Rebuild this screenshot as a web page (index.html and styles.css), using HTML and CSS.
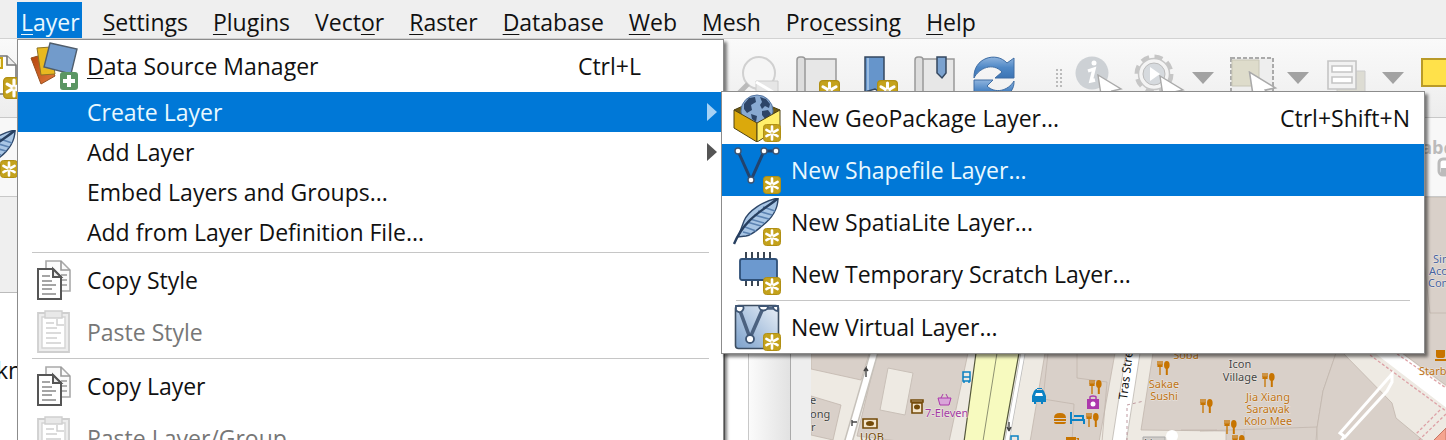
FILE: index.html
```html
<!DOCTYPE html>
<html lang="en">
<head>
<meta charset="utf-8">
<meta name="viewport" content="width=device-width, initial-scale=1">
<title>Layer menu</title>
<link rel="stylesheet" href="styles.css">
</head>
<body>
<svg class="defs" aria-hidden="true">
  <defs>
    <linearGradient id="gBlue" x1="0" y1="0" x2="0" y2="1"><stop offset="0" stop-color="#8fb4de"/><stop offset=".5" stop-color="#4f88c6"/><stop offset="1" stop-color="#3c74b4"/></linearGradient>
    <linearGradient id="gVirtual" x1="0" y1="1" x2="1" y2="0"><stop offset="0" stop-color="#7ba0cb"/><stop offset="1" stop-color="#eaf0f7"/></linearGradient>
    <linearGradient id="gOrange" x1="0" y1="0" x2="1" y2="1"><stop offset="0" stop-color="#b5440c"/><stop offset="1" stop-color="#e07a3c"/></linearGradient>
    <symbol id="badge" viewBox="0 0 18 18">
      <rect x=".5" y=".5" width="17" height="17" rx="3" fill="#c4a21c" stroke="#b08f14"/>
      <path d="M9 2.500v13M3.400 5.800l11.200 6.400M14.600 5.800L3.400 12.200" stroke="#fff" stroke-width="2.600" stroke-linecap="round"/>
      <circle cx="9" cy="9" r="1.300" fill="#e0cc80"/>
    </symbol>
    <symbol id="sources" viewBox="0 0 48 48">
      <path d="M1 16l14-4 10 22-14 8z" fill="url(#gOrange)" stroke="#97501f"/>
      <path d="M7 6l14-1 4 27-14 1z" fill="#e8b920" stroke="#8e7425"/>
      <path d="M20 1l27 6-6 25-27-7z" fill="#729bcb" stroke="#4f5d6c" stroke-width="1.400"/>
      <rect x="30" y="30" width="18" height="18" rx="3" fill="#5b9663"/>
      <path d="M39 33v12M33 39h12" stroke="#fff" stroke-width="4"/>
    </symbol>
    <symbol id="copy" viewBox="0 0 48 48">
      <path d="M16 5h15l9 9v21H16z" fill="#fafafa" stroke="#a9a9a9" stroke-width="1.600"/>
      <path d="M31 5v9h9M31 19h6M31 24h6M31 29h6" fill="none" stroke="#999" stroke-width="1.600"/>
      <path d="M8 13h15l8 8v22H8z" fill="#fff" stroke="#555" stroke-width="2"/>
      <path d="M23 13v8h8z" fill="#eee" stroke="#555" stroke-width="2"/>
      <path d="M12 20h8M12 25h10M12 29h14M12 33h10M12 38h14" stroke="#888" stroke-width="1.600"/>
    </symbol>
    <symbol id="paste" viewBox="0 0 48 48">
      <path d="M8 5h31v39H8z" fill="#ededed" stroke="#cfcfcf" stroke-width="1.800"/>
      <path d="M12 9h23v31H12z" fill="#fff" stroke="#d4d4d4" stroke-width="1.400"/>
      <path d="M15 3h17v7H15z" fill="#e8e8e8" stroke="#cfcfcf" stroke-width="1.400"/>
      <path d="M27 11v6h7M16 15h8M16 20h11M16 25h15M16 30h11M16 35h15" fill="none" stroke="#d0d0d0" stroke-width="1.500"/>
    </symbol>
    <symbol id="geopackage" viewBox="0 0 48 48">
      <path d="M1 16l22-10 24 10-23 13z" fill="#6e5a12" stroke="#4b4014"/>
      <circle cx="24" cy="17" r="16" fill="#89aad2" stroke="#5273a0"/>
      <path d="M11 10l5-6 6-1 1 5-5 3 1 5-5 3-3-4zM27 3l6 2 4 5-1 4-4-2-3 3-2-4 2-3zM18 20l6 2-1 6-4-3zM29 17l6-1 3 4-5 6-4-5z" fill="#2d4568"/>
      <path d="M1 16l23 13v19L1 34z" fill="#dba90c" stroke="#4f4213"/>
      <path d="M47 16L24 29v19l23-14z" fill="#ffef6b" stroke="#4f4213"/>
      <use href="#badge" x="30" y="30" width="18" height="18"/>
    </symbol>
    <symbol id="shape" viewBox="0 0 48 48">
      <path d="M5 5l13 29L31 5h12" fill="none" stroke="#21436e" stroke-width="3"/>
      <g fill="#fff" stroke="#3c5574" stroke-width="1.400"><circle cx="5" cy="5" r="3"/><circle cx="18" cy="34" r="3"/><circle cx="31" cy="5" r="3"/><circle cx="43" cy="5" r="3"/></g>
      <use href="#badge" x="30" y="30" width="18" height="18"/>
    </symbol>
    <symbol id="feather" viewBox="0 0 48 48">
      <path d="M45 0C30 3 15 13 11 23L5 39l8-1c6-1 10-5 16-10 9-7 16-15 16-28z" fill="#a9c6e5" stroke="#2e4769" stroke-width="1.400"/>
      <path d="M14 24l14 4M17 21l14 4M21 17l15 4M25 13l14 4M30 9l12 4M12 29l11 4M10 34l8 2" stroke="#5c83b2" stroke-width="1.600"/>
      <path d="M45 0C33 11 12 19 1 46" fill="none" stroke="#273f60" stroke-width="2.400"/>
      <use href="#badge" x="30" y="30" width="18" height="18"/>
    </symbol>
    <symbol id="chip" viewBox="0 0 48 48">
      <path d="M13 2v8M19 2v8M25 2v8M31 2v8M37 2v8M13 29v7M19 29v7M25 29v7" stroke="#3b4653" stroke-width="2"/>
      <rect x="7" y="9" width="37" height="21" rx="2" fill="#6c99cf" stroke="#2f5078" stroke-width="1.800"/>
      <use href="#badge" x="30" y="27" width="18" height="18"/>
    </symbol>
    <symbol id="virtual" viewBox="0 0 48 48">
      <rect x="2.500" y="2.500" width="43" height="43" rx="3" fill="url(#gVirtual)" stroke="#3d4e62" stroke-width="1.600"/>
      <path d="M6 5l11 30L30 5h14" fill="none" stroke="#4c6280" stroke-width="3.600"/>
      <g fill="#fff" stroke="#3f5674" stroke-width="1.800"><path d="M3 3h7a4 4 0 0 1-7 4zM26 3h9a4 4 0 0 1-9 0zM40 3h5v5a5 5 0 0 1-5-5z"/><circle cx="17" cy="36" r="4"/></g>
      <use href="#badge" x="30" y="30" width="18" height="18"/>
    </symbol>
    <symbol id="fork" viewBox="0 0 13 15">
      <path d="M1 0v4M3 0v4M5 0v4M3 4v10" stroke="#c77400" stroke-width="1.300"/><path d="M.4 3.500h5.200V6H.4z" fill="#c77400"/>
      <ellipse cx="9.800" cy="4" rx="2.800" ry="4" fill="#c77400"/><path d="M9.800 6v8" stroke="#c77400" stroke-width="2"/>
    </symbol>
    <symbol id="cursor" viewBox="0 0 26 32"><path d="M1 1l23 14-9 2 7 10-5 3-7-10-5 7z" fill="#fff" stroke="#aaa" stroke-width="1.400"/></symbol>
  </defs>
</svg>

<div class="app">
  <nav class="menubar" aria-label="Main menu">
    <button class="menubar-item is-open"><u>L</u>ayer</button>
    <button class="menubar-item"><u>S</u>ettings</button>
    <button class="menubar-item"><u>P</u>lugins</button>
    <button class="menubar-item">Vect<u>o</u>r</button>
    <button class="menubar-item"><u>R</u>aster</button>
    <button class="menubar-item"><u>D</u>atabase</button>
    <button class="menubar-item"><u>W</u>eb</button>
    <button class="menubar-item"><u>M</u>esh</button>
    <button class="menubar-item">Pro<u>c</u>essing</button>
    <button class="menubar-item"><u>H</u>elp</button>
  </nav>

  <div class="toolbar">
    <div class="tool-start">
      <button class="tool" aria-label="New print layout"><svg viewBox="0 0 48 48"><path d="M8 5h29l9 9v29H8z" fill="#fff" stroke="#777" stroke-width="1.600"/><path d="M37 5v9h9" fill="#eee" stroke="#777" stroke-width="1.600"/><path d="M24 7h8v10h-8z" fill="#fff3b0" stroke="#c9a413" stroke-width="2"/><use href="#badge" x="33" y="26" width="22" height="22"/></svg></button>
    </div>
    <button class="tool" aria-label="Zoom last"><svg viewBox="0 0 48 48"><circle cx="24" cy="19" r="16" fill="#f5f5f5" stroke="#d0d0d0" stroke-width="2"/><path d="M13 30L2 41" stroke="#bbb" stroke-width="5"/><path d="M21 27h22v18H21z" fill="#e6e6e6" stroke="#ccc"/><path d="M21 28l17 10" stroke="#fff" stroke-width="3"/></svg></button>
    <button class="tool" aria-label="New map view"><svg viewBox="0 0 48 48"><path d="M6 5h36v37H6z" fill="#e7e7e7" stroke="#999" stroke-width="1.500"/><rect x="3" y="3" width="8" height="41" rx="3" fill="#ddd" stroke="#999" stroke-width="1.500"/><use href="#badge" x="25" y="26" width="21" height="21"/></svg></button>
    <button class="tool" aria-label="New bookmark"><svg viewBox="0 0 48 48"><path d="M12 3h19v38l-9-6-10 3z" fill="#6695cb" stroke="#34475f" stroke-width="1.500"/><path d="M15 4v32" stroke="#9bbde2" stroke-width="2"/><use href="#badge" x="24" y="26" width="21" height="21"/></svg></button>
    <button class="tool" aria-label="Show bookmarks"><svg viewBox="0 0 48 48"><path d="M6 5h36v37H6z" fill="#e7e7e7" stroke="#999" stroke-width="1.500"/><rect x="3" y="3" width="8" height="41" rx="3" fill="#ddd" stroke="#999" stroke-width="1.500"/><path d="M25 3h9v16l-4 5-5-5z" fill="#7ba2cf" stroke="#34475f" stroke-width="1.500"/></svg></button>
    <button class="tool" aria-label="Refresh"><svg viewBox="0 0 48 48"><path d="M3 24C2 4 25-3 36 9l7-5v20H24l7-6c-9-10-23-4-28 6z" fill="url(#gBlue)" stroke="#3f6da3"/><path d="M3 26h19l-6 6c8 8 21 5 27-5 1 16-21 25-34 13l-6 5z" fill="url(#gBlue)" stroke="#3f6da3"/></svg></button>
    <span class="grip"></span>
    <button class="tool" aria-label="Identify features"><svg viewBox="0 0 48 48"><circle cx="18" cy="19" r="16.500" fill="#cdd1d5"/><path d="M14 17l6-2-3 12 4-1" fill="none" stroke="#fff" stroke-width="3.400"/><circle cx="20" cy="9" r="2.500" fill="#fff"/><use href="#cursor" x="23" y="20" width="26" height="32"/></svg></button>
    <button class="tool" aria-label="Run feature action"><svg viewBox="0 0 48 48"><circle cx="21" cy="20" r="17" fill="none" stroke="#c6c6c6" stroke-width="5" stroke-dasharray="8 5.350"/><circle cx="21" cy="20" r="15.500" fill="#f4f4f4" stroke="#c6c6c6" stroke-width="1.500"/><circle cx="21" cy="20" r="11" fill="#d6dade" stroke="#bbb"/><path d="M17 13l10 7-10 7z" fill="#fff"/><use href="#cursor" x="26" y="21" width="26" height="32"/></svg></button>
    <span class="caret-down"></span>
    <button class="tool" aria-label="Select features"><svg viewBox="0 0 48 48"><path d="M3 4h42v41H3z" fill="#eee" stroke="#aaa" stroke-width="2" stroke-dasharray="4 2"/><path d="M4 6h27v26H4z" fill="#dedccb" stroke="#c8c6b6"/><use href="#cursor" x="20" y="17" width="30" height="36"/></svg></button>
    <span class="caret-down"></span>
    <button class="tool" aria-label="Select by form"><svg viewBox="0 0 48 48"><path d="M14 17h28v27H14z" fill="#dddcd3" stroke="#ccc"/><path d="M5 7h28v28H5z" fill="#f2f2f2" stroke="#c5c5c5" stroke-width="1.600"/><path d="M9 12h20v6H9zM9 23h20v6H9z" fill="#fff" stroke="#c5c5c5" stroke-width="1.600"/></svg></button>
    <span class="caret-down"></span>
    <button class="tool" aria-label="Deselect"><svg viewBox="0 0 48 48"><path d="M4 5h36v27H4z" fill="#ffe14a" stroke="#b99a28" stroke-width="2"/></svg></button>
  </div>

  <div class="toolbar toolbar-second">
    <div class="tool-start">
      <button class="tool" aria-label="New SpatiaLite layer"><svg viewBox="0 0 48 48"><use href="#feather" width="48" height="48"/></svg></button>
    </div>
    <button class="label-tool" aria-label="Layer labeling">abc<svg viewBox="0 0 24 20"><rect x="6" y="2" width="20" height="16" rx="4" fill="#fff" stroke="#bbb" stroke-width="3"/><path d="M8 11h18v6H8z" fill="#bbb"/></svg></button>
  </div>

  <main class="workspace">
    <aside class="panel"><div class="panel-head"></div><div class="panel-body">kn</div></aside>
    <div class="dock"></div>
    <div class="dock-edge"></div>
    <svg class="map" viewBox="811 196 635 244" preserveAspectRatio="xMinYMin slice" role="img" aria-label="Street map">
      <path d="M811 196h635v244H811z" fill="#eeeae3"/>
      <g fill="#d9d0c9" stroke="#c1b6ad" stroke-width=".8">
        <path d="M811 196h98l-40 157-8 26-50-11z"/>
        <path d="M811 395l30 9-8 35-22-5z"/>
        <path d="M877 352h91l-19 89h-43l-49-6z"/>
        <path d="M1045 352h70l-16 89h-69z"/>
        <path d="M1153 352h183l-13 38-6 37-1 13h-90v-10l-85-1z"/>
        <path d="M1336 352h7l49 50 4 15 29 24H1317v-14l6-37z"/>
        <path d="M1418 196h29v189l-45-33z"/>
        <path d="M1048 352l-5 46 31 5-2 38M1077 352v25l30 4-5 60M1181 429h36M1200 430l117-4M1244 430v10M1424 260l6 52h16" fill="none"/>
      </g>
      <path d="M888 367l25 5-8 42-25-5z" fill="#eeeae3" stroke="#c9c0b8"/>
      <path d="M874 352l-26 90" stroke="#c6c1ba" stroke-width="9"/><path d="M874 352l-26 90" stroke="#fff" stroke-width="6"/>
      <path d="M976 352h43l-16 89h-39z" fill="#f7fabf" stroke="#55583c" stroke-width="1.200"/>
      <path d="M997 352l-14 88" stroke="#8e9171"/>
      <path d="M1023 352l-16 88" stroke="#bbb" stroke-width="5"/><path d="M1023 352l-16 88" stroke="#fff" stroke-width="3.500"/>
      <path d="M1133 352l-14 90" stroke="#c9c4be" stroke-width="15"/><path d="M1133 352l-14 90" stroke="#fff" stroke-width="13"/>
      <path d="M1127 440v-36l17-4" fill="none" stroke="#bf9aa0" stroke-dasharray="3 3"/>
      <path d="M1380 346l72 55" stroke="#fff" stroke-width="16"/>
      <path d="M1370 354l76 56M1393 350l53 37M1446 413l-28 27M1440 409l-24 24" fill="none" stroke="#dda0a5" stroke-width="1.300" stroke-dasharray="3 2"/>
      <path d="M1392 373l-52 59 5 4 42-46 5-9zM1345 434l-5 8" fill="none" stroke="#fff" stroke-width="3"/>
      <path d="M1433 440l13-13v13z" fill="#f5a48f" stroke="#c67564"/>
      <circle cx="1172" cy="435" r="6" fill="#fff"/><path d="M1143 436h22v5h-22z" fill="#d0cdc9" stroke="#aaa"/>
      <path d="M866 376v-9l-2 3m2-3l2 3M852 425v-6m0 2h5M1009 421v9l-2-4m2 4l2-4" fill="none" stroke="#444" stroke-width="1.400"/>
      <g>
        <use href="#fork" x="1157" y="360" width="13" height="15"/><use href="#fork" x="1089" y="379" width="13" height="15"/><use href="#fork" x="1086" y="412" width="13" height="15"/><use href="#fork" x="1200" y="398" width="13" height="15"/><use href="#fork" x="1262" y="372" width="13" height="15"/><use href="#fork" x="1224" y="419" width="13" height="15"/><use href="#fork" x="1232" y="434" width="13" height="15"/>
      </g>
      <path d="M1034 390l2-2h6l2 2 2 5v6h-3v2h-2v-2h-5v2h-2v-2h-2v-6zM1037 389h5v-2h-5z" fill="#0c82c4"/><path d="M1035 395h8l-1-3h-6z" fill="#fff"/>
      <path d="M1054 417q0-5 6-5t6 5zM1054 418h12v2h-12zM1054 421h12q0 2-2 2h-8q-2 0-2-2z" fill="#c77400"/>
      <path d="M1071 411v12M1071 419h13v4M1074 415h9v3" fill="none" stroke="#0c82c4" stroke-width="2"/>
      <path d="M1087 398h12v10h-12z" fill="#ac39ac"/><path d="M1090 398v-2q0-1 3-1t3 1v2" fill="none" stroke="#ac39ac" stroke-width="1.500"/><circle cx="1093" cy="403" r="2.500" fill="#fff"/>
      <path d="M1066 436h10v5h-10zM1076 437h3v3" fill="#c77400"/>
      <path d="M1436 349h9v6q0 2-2 2h-5q-2 0-2-2zM1435 358h11v2h-11z" fill="#c77400"/>
      <g fill="none" stroke="#0c82c4" stroke-width="1.500"><path d="M963 371h7v9h-7zM963 376h7M964 380v2M969 380v2M1011 435h7v7h-7z"/></g>
      <path d="M938 397h13l-2 7h-9zM941 397l2-4M948 397l-2-4" fill="#d9a5d9" stroke="#ac39ac"/>
      <path d="M911 401h12v-2h-12zM912 402v10h10v-10zM863 418h14v9h-14z" fill="#f3e5cc" stroke="#734a08" stroke-width="1.600"/><ellipse cx="917" cy="406" rx="3" ry="2.500" fill="#734a08"/><ellipse cx="870" cy="422.500" rx="4" ry="2.500" fill="#734a08"/>
      <g class="map-text">
        <g class="map-dark"><text x="810" y="403">e</text><text x="810" y="417">ong</text><text x="811" y="430">r</text><text x="1240" y="367" text-anchor="middle">Icon</text><text x="1240" y="380" text-anchor="middle">Village</text><text x="1144" y="446">Lion</text></g>
        <g class="map-food" text-anchor="middle"><text x="1186" y="358">Soba</text><text x="1164" y="387">Sakae</text><text x="1164" y="399">Sushi</text><text x="1268" y="400">Jia Xiang</text><text x="1268" y="412">Sarawak</text><text x="1268" y="424">Kolo Mee</text></g>
        <text class="map-food" x="1419" y="374">Starbucks</text>
        <text class="map-shop" x="925" y="416">7-Eleven</text><text class="map-bank" x="860" y="440">UOB</text>
        <g class="map-office"><text x="1433" y="262">Singapore</text><text x="1429" y="274">Acoustics</text><text x="1428" y="286">Company</text></g>
      </g>
      <text class="map-road" transform="translate(1127 399) rotate(-83)">Tras Street</text>
    </svg>
  </main>

  <div class="menu" role="menu" aria-label="Layer">
    <button class="item item-tall" role="menuitem"><svg class="icon" aria-hidden="true"><use href="#sources"/></svg><span><u>D</u>ata Source Manager</span><kbd>Ctrl+L</kbd></button>
    <button class="item is-active" role="menuitem" aria-haspopup="true"><span>Create Layer</span><i class="arrow"></i></button>
    <button class="item" role="menuitem" aria-haspopup="true"><span>Add Layer</span><i class="arrow"></i></button>
    <button class="item" role="menuitem"><span>Embed Layers and Groups...</span></button>
    <button class="item" role="menuitem"><span>Add from Layer Definition File...</span></button>
    <hr>
    <button class="item item-tall" role="menuitem"><svg class="icon" aria-hidden="true"><use href="#copy"/></svg><span>Copy Style</span></button>
    <button class="item item-tall" role="menuitem" disabled><svg class="icon" aria-hidden="true"><use href="#paste"/></svg><span>Paste Style</span></button>
    <hr>
    <button class="item item-tall" role="menuitem"><svg class="icon" aria-hidden="true"><use href="#copy"/></svg><span>Copy Layer</span></button>
    <button class="item item-tall" role="menuitem" disabled><svg class="icon" aria-hidden="true"><use href="#paste"/></svg><span>Paste Layer/Group</span></button>
  </div>

  <div class="menu submenu" role="menu" aria-label="Create Layer">
    <button class="item item-tall" role="menuitem"><svg class="icon" aria-hidden="true"><use href="#geopackage"/></svg><span>New GeoPackage Layer...</span><kbd>Ctrl+Shift+N</kbd></button>
    <button class="item item-tall is-active" role="menuitem"><svg class="icon" aria-hidden="true"><use href="#shape"/></svg><span>New Shapefile Layer...</span></button>
    <button class="item item-tall" role="menuitem"><svg class="icon" aria-hidden="true"><use href="#feather"/></svg><span>New SpatiaLite Layer...</span></button>
    <button class="item item-tall" role="menuitem"><svg class="icon" aria-hidden="true"><use href="#chip"/></svg><span>New Temporary Scratch Layer...</span></button>
    <hr>
    <button class="item item-tall" role="menuitem"><svg class="icon" aria-hidden="true"><use href="#virtual"/></svg><span>New Virtual Layer...</span></button>
  </div>
</div>
</body>
</html>
```
FILE: styles.css
```css
* { box-sizing: border-box; }

body {
  margin: 0;
  background: #fff;
  color: #111;
  font: 23px/30px "Open Sans", "Noto Sans", sans-serif;
}

button {
  margin: 0;
  padding: 0;
  border: 0;
  background: none;
  color: inherit;
  font: inherit;
}

u {
  text-decoration-thickness: 1px;
  text-underline-offset: 3px;
}

.defs { position: absolute; width: 0; height: 0; }

.app {
  position: relative;
  display: flex;
  flex-direction: column;
  height: 100vh;
  overflow: hidden;
}

.menubar {
  display: flex;
  gap: 17px;
  padding: 2px 17px 0;
  background: #efefef;
  border-bottom: 1px solid #d2d2d2;
}

.menubar-item { padding: 5px 4px 1px; }
.menubar-item.is-open { padding-right: 2px; background: #0078d7; color: #e9f8ff; }

.toolbar {
  display: flex;
  flex: none;
  align-items: center;
  gap: 11px;
  height: 79px;
  background: linear-gradient(#fafafa, #ededed);
  border-bottom: 1px solid #c8c8c8;
}

.toolbar-second { background: #f8f8f8; }
.tool-start { flex: none; width: 754px; margin-left: -30px; }
.toolbar .tool { flex: none; width: 48px; height: 48px; }
.tool svg { display: block; width: 48px; height: 48px; overflow: visible; }
.grip { flex: none; width: 8px; height: 20px; margin: 0 0 0 25px; background: radial-gradient(#bbb 1px, transparent 1px) 0 0 / 4px 4px; }

.caret-down {
  flex: none;
  margin: 0 3px 0 0;
  border: 11px solid transparent;
  border-top: 12px solid #a2a2a2;
  border-bottom: 0;
}

.label-tool { display: grid; flex: none; margin-left: 682px; color: #bbb; font-size: 18px; font-weight: 700; line-height: 20px; }
.label-tool svg { width: 24px; height: 20px; margin-left: 16px; }

.workspace {
  display: grid;
  flex: 1;
  grid-template-columns: 725px 24px 62px 1fr;
  min-height: 0;
}

.panel { display: flex; flex-direction: column; border-right: 2px solid #999; }
.panel-head { height: 96px; background: #efefef; border-bottom: 1px solid #bbb; }
.panel-body { padding-top: 62px; margin-left: -4px; }
.dock { border-right: 1px solid #c8c8c8; }
.dock-edge { background: linear-gradient(90deg, #fbfbfb, #e2e2e2 41px, #aaa 41px, #aaa 42px, #eee 42px); }
.map { width: 100%; height: 100%; }

.map-text { font: 11px "Noto Sans", sans-serif; paint-order: stroke; stroke: #f3efeacc; stroke-width: 1px; }
.map-dark { fill: #444; }
.map-food { fill: #bd7212; }
.map-shop { fill: #a33aa3; }
.map-bank { fill: #734a08; }
.map-office { fill: #4863a0; }
.map-road { font: 12px "Noto Sans", sans-serif; fill: #111; }

.menu {
  position: absolute;
  top: 39px;
  left: 17px;
  width: 707px;
  border: 1px solid #8c8c8c;
  background: #fff;
  box-shadow: 3px 3px 3px #00000080;
}

.submenu { top: 91px; left: 721px; width: 704px; }

.item {
  display: flex;
  align-items: center;
  width: 100%;
  height: 40px;
  padding: 0 14px 0 69px;
  text-align: left;
  white-space: nowrap;
}

.item-tall { height: 52px; padding-left: 12px; }
.submenu .item-tall { padding-left: 11px; }
.icon { flex: none; width: 48px; height: 48px; margin-right: 9px; }
.submenu .icon { margin-right: 10px; }
.item.is-active { background: #0078d7; color: #e9f8ff; }
.item:disabled { color: #777; }
.item kbd { margin-left: auto; padding-right: 68px; font: inherit; }
.submenu .item kbd { padding-right: 0; }

.arrow {
  margin-left: auto;
  margin-right: -8px;
  border: 9px solid transparent;
  border-left: 10px solid #555;
  border-right: 0;
}
.is-active .arrow { border-left-color: #a6d2f5; }

.menu hr { height: 2px; margin: 0 14px; border: 0; border-top: 1px solid #c6c6c6; }
.submenu hr { height: 1px; }
```
